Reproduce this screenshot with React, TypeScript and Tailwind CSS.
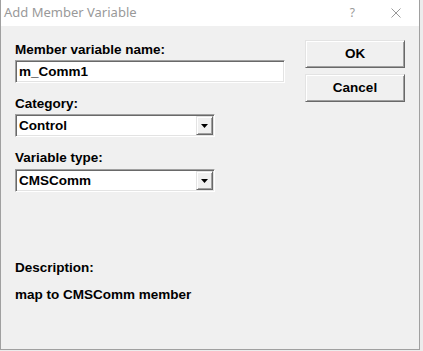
const dlgFont = { fontFamily: '"Liberation Sans", Arial, sans-serif' };

function Sunken({ width, children }: { width: string; children: React.ReactNode }) {
  return (
    <div
      className={`${width} h-[23px] bg-white border border-t-[#a0a0a0] border-l-[#a0a0a0] border-b-white border-r-white shadow-[inset_1px_1px_0_#696969,inset_-1px_-1px_0_#e3e3e3] p-[1px] flex items-stretch`}
    >
      {children}
    </div>
  );
}

function Combo({ value }: { value: string }) {
  return (
    <Sunken width="w-[200px]">
      <div className="flex-1 flex items-center pl-[2px] text-[13.5px] leading-[16px] font-bold text-black">{value}</div>
      <div className="w-[17px] bg-[#f0f0f0] border border-t-[#e3e3e3] border-l-[#e3e3e3] border-b-[#696969] border-r-[#696969] shadow-[inset_1px_1px_0_#ffffff,inset_-1px_-1px_0_#a0a0a0] flex items-center justify-center">
        <svg width="7" height="4" viewBox="0 0 7 4">
          <path d="M0 0H7L3.5 4Z" fill="#000" />
        </svg>
      </div>
    </Sunken>
  );
}

function Button({ label }: { label: string }) {
  return (
    <div className="w-[100px] h-[28px] bg-[#f0f0f0] border border-t-[#e3e3e3] border-l-[#e3e3e3] border-b-[#696969] border-r-[#696969] shadow-[inset_1px_1px_0_#ffffff,inset_-1px_-1px_0_#a0a0a0] flex items-center justify-center text-[13.5px] leading-[16px] font-bold text-black">
      {label}
    </div>
  );
}

export default function App() {
  return (
    <div className="w-[423px] h-[351px] bg-[#ececec] overflow-hidden" style={dlgFont}>
      <div className="w-[420px] h-[350px] border border-t-0 border-[#a0a0a0] bg-[#f0f0f0] flex flex-col">
        {/* Title bar */}
        <div className="h-[26px] bg-white flex items-center pl-[3px] shrink-0">
          <span className="text-[13px] text-[#999999]" style={{ fontFamily: '"Noto Sans", sans-serif' }}>
            Add Member Variable
          </span>
          <span className="ml-auto text-[12px] text-[#999999] mr-[36px]" style={{ fontFamily: '"Noto Sans", sans-serif' }}>
            ?
          </span>
          <svg width="10" height="10" viewBox="0 0 10 10" className="mr-[18px]">
            <path d="M0.5 0.5L9.5 9.5M9.5 0.5L0.5 9.5" stroke="#999999" strokeWidth="1" />
          </svg>
        </div>

        {/* Body */}
        <div className="flex-1 flex px-[14px]">
          <div className="flex flex-col">
            <div className="mt-[16px] text-[13.5px] leading-[16px] font-bold text-black">Member variable name:</div>
            <div className="mt-[2px]">
              <Sunken width="w-[270px]">
                <div className="flex-1 flex items-center pl-[2px] text-[13.5px] leading-[16px] font-bold text-black">m_Comm1</div>
              </Sunken>
            </div>

            <div className="mt-[13px] text-[13.5px] leading-[16px] font-bold text-black">Category:</div>
            <div className="mt-[2px]">
              <Combo value="Control" />
            </div>

            <div className="mt-[13px] text-[13.5px] leading-[16px] font-bold text-black">Variable type:</div>
            <div className="mt-[3px]">
              <Combo value="CMSComm" />
            </div>

            <div className="mt-[68px] text-[13.5px] leading-[16px] font-bold text-black">Description:</div>
            <div className="mt-[11px] text-[13.5px] leading-[16px] font-bold text-black">map to CMSComm member</div>
          </div>

          <div className="ml-auto flex flex-col gap-[6px] pt-[14px]">
            <Button label="OK" />
            <Button label="Cancel" />
          </div>
        </div>
      </div>
    </div>
  );
}
